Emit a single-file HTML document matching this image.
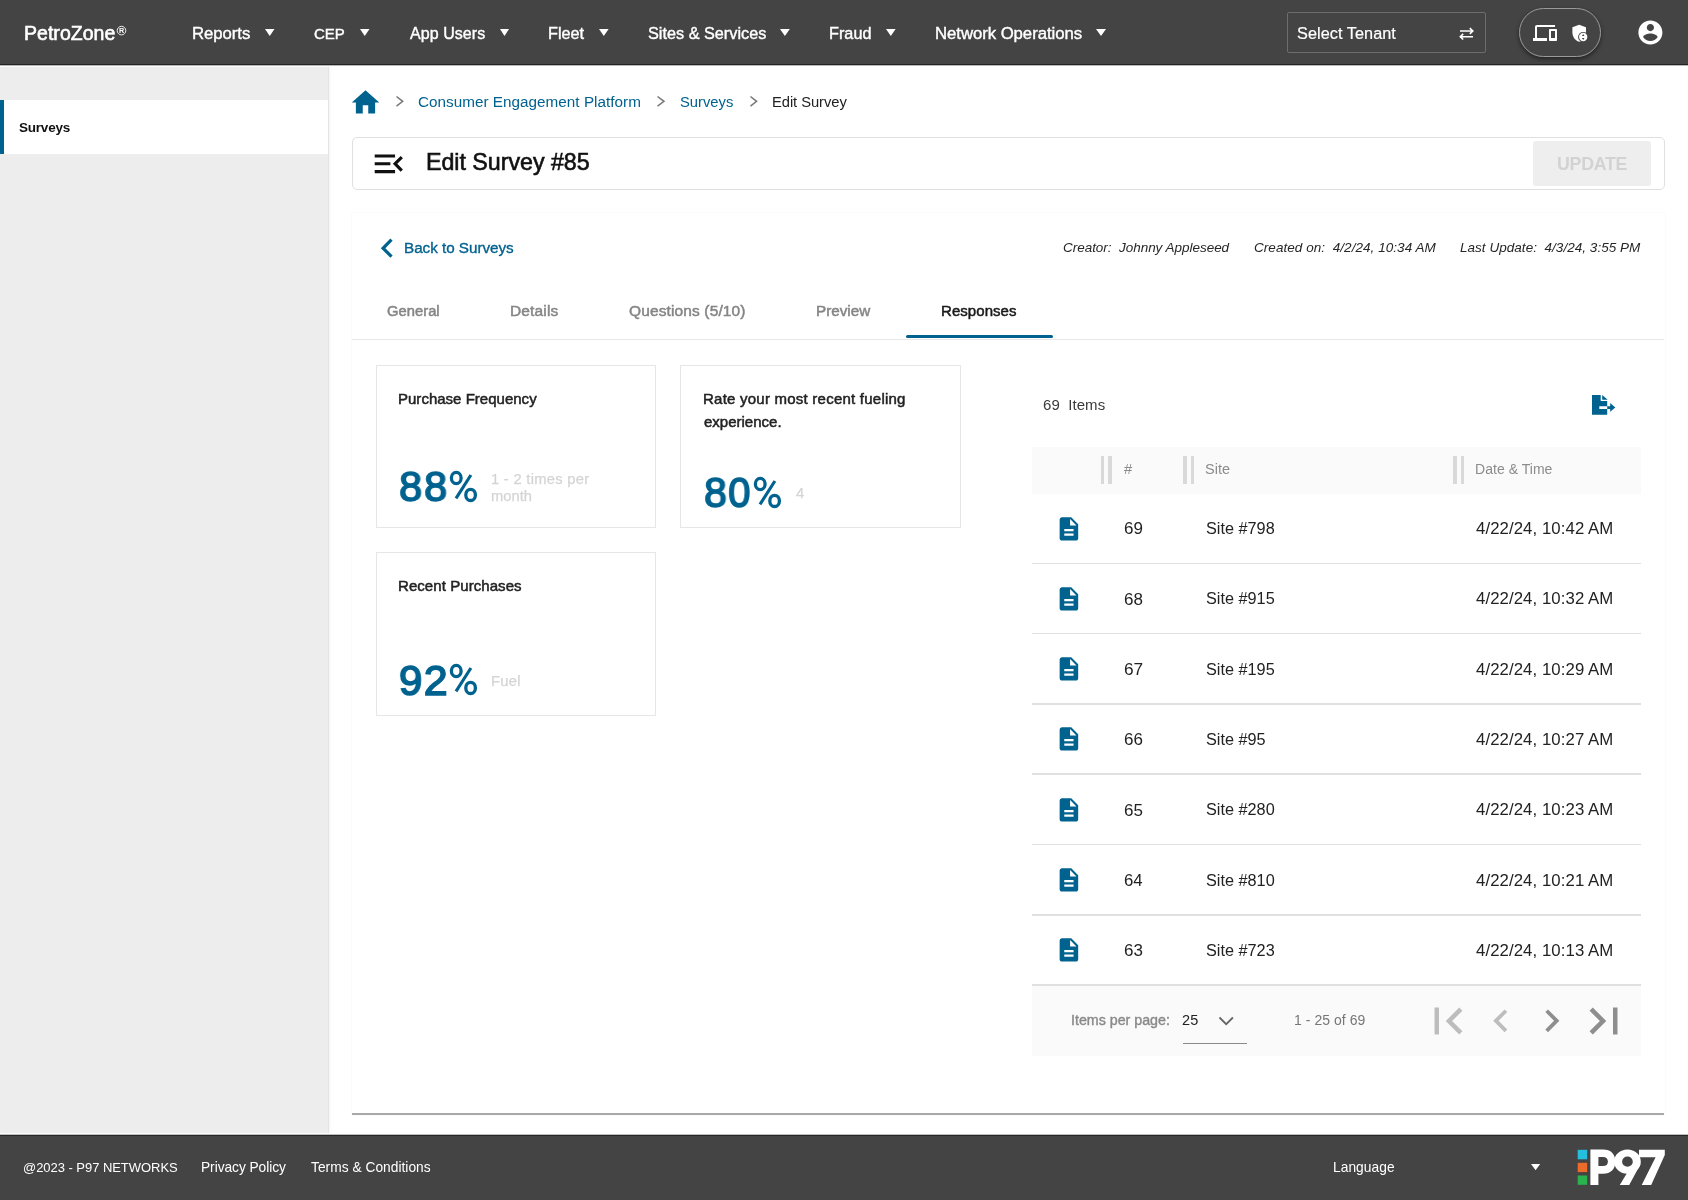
<!DOCTYPE html>
<html><head><meta charset="utf-8"><style>
html,body{margin:0;padding:0;width:1688px;height:1200px;overflow:hidden;background:#fff;position:relative}
body{font-family:"Liberation Sans",sans-serif}
.t{position:absolute;white-space:pre;will-change:transform}
body{-webkit-font-smoothing:antialiased}
svg{position:absolute;will-change:transform}
</style></head><body>
<div style="position:absolute;left:0px;top:67px;width:328px;height:1066px;background:#ededed;box-shadow:1px 0 0 #e4e4e4, 2px 0 3px rgba(0,0,0,.05)"></div>
<div style="position:absolute;left:0px;top:100px;width:328px;height:54px;background:#fff"></div>
<div style="position:absolute;left:0px;top:100px;width:4px;height:54px;background:#00628f"></div>
<div style="position:absolute;left:352px;top:213px;width:1313px;height:902px;background:#fff;box-shadow:0 0 1px rgba(0,0,0,.10)"></div>
<div style="position:absolute;left:352px;top:1113px;width:1312px;height:2px;background:#a8a8a8"></div>
<div style="position:absolute;left:0px;top:0px;width:1688px;height:64px;background:#444;border-bottom:1px solid #232323"></div>
<div style="position:absolute;left:0px;top:65px;width:1688px;height:1px;background:rgba(0,0,0,.28)"></div>
<div style="position:absolute;left:0px;top:1135px;width:1688px;height:65px;background:#444;border-top:1px solid #262626"></div>
<div style="position:absolute;left:0px;top:1134px;width:1688px;height:1px;background:rgba(0,0,0,.25)"></div>
<div class="t" style="left:23.64px;top:23.80px;font-size:19.5px;line-height:19.5px;color:#ffffff;letter-spacing:0.034px;-webkit-text-stroke:0.6px #ffffff;">PetroZone</div>
<svg style="position:absolute;left:116px;top:25px;" width="11" height="11" viewBox="0 0 11 11"><circle cx="5.5" cy="5.6" r="4.3" stroke="#fff" stroke-width="0.9" fill="none"/><text x="5.5" y="8.3" font-size="7.2" font-family="Liberation Sans" font-weight="700" fill="#fff" text-anchor="middle">R</text></svg>
<div class="t" style="left:191.86px;top:25.66px;font-size:16.75px;line-height:16.75px;color:#ffffff;letter-spacing:-0.050px;-webkit-text-stroke:0.4px #ffffff;">Reports</div>
<svg style="position:absolute;left:264px;top:28.1px;" width="11.5" height="9.0" viewBox="264 28.1 11.5 9.0"><path d="M265 29.1H274.5L269.75 36.1Z" fill="#fff"/></svg>
<div class="t" style="left:313.85px;top:25.66px;font-size:15.0px;line-height:15.0px;color:#ffffff;letter-spacing:-0.062px;-webkit-text-stroke:0.4px #ffffff;">CEP</div>
<svg style="position:absolute;left:359px;top:28.1px;" width="11.5" height="9.0" viewBox="359 28.1 11.5 9.0"><path d="M360 29.1H369.5L364.75 36.1Z" fill="#fff"/></svg>
<div class="t" style="left:409.60px;top:25.66px;font-size:16.0px;line-height:16.0px;color:#ffffff;letter-spacing:0.055px;-webkit-text-stroke:0.4px #ffffff;">App Users</div>
<svg style="position:absolute;left:498.5px;top:28.1px;" width="11.0" height="9.0" viewBox="498.5 28.1 11.0 9.0"><path d="M499.5 29.1H508.5L504.0 36.1Z" fill="#fff"/></svg>
<div class="t" style="left:548.30px;top:24.66px;font-size:16.25px;line-height:16.25px;color:#ffffff;-webkit-text-stroke:0.4px #ffffff;">Fleet</div>
<svg style="position:absolute;left:598px;top:28.1px;" width="11.600000000000023" height="9.0" viewBox="598 28.1 11.600000000000023 9.0"><path d="M599 29.1H608.6L603.8 36.1Z" fill="#fff"/></svg>
<div class="t" style="left:647.97px;top:24.66px;font-size:16.25px;line-height:16.25px;color:#ffffff;-webkit-text-stroke:0.4px #ffffff;">Sites &amp; Services</div>
<svg style="position:absolute;left:779.4px;top:28.1px;" width="11.800000000000068" height="9.0" viewBox="779.4 28.1 11.800000000000068 9.0"><path d="M780.4 29.1H790.2L785.3 36.1Z" fill="#fff"/></svg>
<div class="t" style="left:829.40px;top:24.66px;font-size:16.25px;line-height:16.25px;color:#ffffff;-webkit-text-stroke:0.4px #ffffff;">Fraud</div>
<svg style="position:absolute;left:885px;top:28.1px;" width="11.600000000000023" height="9.0" viewBox="885 28.1 11.600000000000023 9.0"><path d="M886 29.1H895.6L890.8 36.1Z" fill="#fff"/></svg>
<div class="t" style="left:934.76px;top:25.66px;font-size:16.75px;line-height:16.75px;color:#ffffff;letter-spacing:-0.056px;-webkit-text-stroke:0.4px #ffffff;">Network Operations</div>
<svg style="position:absolute;left:1095px;top:28.1px;" width="12" height="9.0" viewBox="1095 28.1 12 9.0"><path d="M1096 29.1H1106L1101.0 36.1Z" fill="#fff"/></svg>
<div style="position:absolute;left:1287px;top:11.5px;width:199px;height:41px;box-sizing:border-box;border:1.5px solid #6d6d6d;border-radius:2px"></div>
<div class="t" style="left:1297.17px;top:24.66px;font-size:16.25px;line-height:16.25px;color:#ffffff;letter-spacing:0.055px;-webkit-text-stroke:0.2px #ffffff;">Select Tenant</div>
<svg style="position:absolute;left:1455px;top:24px;" width="22" height="20" viewBox="1455 24 22 20"><path d="M1460 31H1472.3M1469.8 28.2L1472.8 31L1469.8 33.8M1473 36.7H1460.6M1463.2 33.9L1460.3 36.7L1463.2 39.5" stroke="#fff" stroke-width="1.6" fill="none"/></svg>
<div style="position:absolute;left:1519px;top:8px;width:82px;height:49px;box-sizing:border-box;border:1.5px solid #9a9a9a;border-radius:25px;box-shadow:0 2px 4px rgba(0,0,0,.5)"></div>
<svg style="position:absolute;left:1533px;top:20.7px;" width="24" height="24" viewBox="0 0 24 24"><path fill="#fff" d="M4 6h18V4H4c-1.1 0-2 .9-2 2v11H0v3h14v-3H4V6zm19 2h-6c-.55 0-1 .45-1 1v10c0 .55.45 1 1 1h6c.55 0 1-.45 1-1V9c0-.55-.45-1-1-1zm-1 9h-4v-7h4v7z"/></svg>
<svg style="position:absolute;left:1569.4px;top:22.5px;" width="20.4" height="20.4" viewBox="0 0 24 24"><path fill="#fff" d="M12,2L4,5v6.09c0,5.05,3.41,9.76,8,10.91c4.59-1.15,8-5.86,8-10.91V5L12,2z"/><circle cx="16.7" cy="16.5" r="6" fill="#444"/><circle cx="16.7" cy="16.5" r="4.9" fill="#fff"/><path d="M16.7 12.9L18.2 15.3H15.2Z M16.7 20.1L18.2 17.7H15.2Z" fill="#444"/></svg>
<svg style="position:absolute;left:1636.1px;top:18.4px;" width="28.8" height="28.8" viewBox="0 0 24 24"><path fill="#fff" d="M12 2C6.48 2 2 6.48 2 12s4.48 10 10 10 10-4.48 10-10S17.52 2 12 2zm0 3c1.66 0 3 1.34 3 3s-1.34 3-3 3-3-1.34-3-3 1.34-3 3-3zm0 14.2c-2.5 0-4.71-1.28-6-3.22.03-1.99 4-3.08 6-3.08 1.99 0 5.97 1.09 6 3.08-1.29 1.94-3.5 3.22-6 3.22z"/></svg>
<div class="t" style="left:18.59px;top:121.30px;font-size:13.5px;line-height:13.5px;color:#111;font-weight:700;letter-spacing:-0.212px;">Surveys</div>
<svg style="position:absolute;left:348.6px;top:85.5px;" width="33" height="33" viewBox="0 0 24 24"><path fill="#00628f" d="M10 20v-6h4v6h5v-8h3L12 3 2 12h3v8z"/></svg>
<svg style="position:absolute;left:393.7px;top:93.9px;" width="11.300000000000011" height="14.599999999999994" viewBox="393.7 93.9 11.300000000000011 14.599999999999994"><path d="M396.2 96.4L402.4 101.2L396.2 106.0" stroke="#777" stroke-width="1.5" fill="none"/></svg>
<svg style="position:absolute;left:654.9px;top:93.9px;" width="11.600000000000023" height="14.599999999999994" viewBox="654.9 93.9 11.600000000000023 14.599999999999994"><path d="M657.4 96.4L663.9 101.2L657.4 106.0" stroke="#777" stroke-width="1.5" fill="none"/></svg>
<svg style="position:absolute;left:747.8px;top:93.9px;" width="11.200000000000045" height="14.599999999999994" viewBox="747.8 93.9 11.200000000000045 14.599999999999994"><path d="M750.3 96.4L756.4 101.2L750.3 106.0" stroke="#777" stroke-width="1.5" fill="none"/></svg>
<div class="t" style="left:418.39px;top:93.66px;font-size:15.25px;line-height:15.25px;color:#00628f;letter-spacing:0.029px;">Consumer Engagement Platform</div>
<div class="t" style="left:679.74px;top:94.66px;font-size:14.75px;line-height:14.75px;color:#00628f;">Surveys</div>
<div class="t" style="left:772.22px;top:94.66px;font-size:14.75px;line-height:14.75px;color:#212121;letter-spacing:-0.067px;">Edit Survey</div>
<div style="position:absolute;left:352px;top:137px;width:1313px;height:53px;box-sizing:border-box;border:1.5px solid #e0e0e0;border-radius:5px;background:#fff"></div>
<svg style="position:absolute;left:370.1px;top:144.6px;" width="37.6" height="37.6" viewBox="0 0 24 24"><path fill="#111" d="M3 18h13v-2H3v2zm0-5h10v-2H3v2zm0-7v2h13V6H3zm18 9.59L17.42 12 21 8.41 19.59 7l-5 5 5 5L21 15.59z"/></svg>
<div class="t" style="left:426.44px;top:151.40px;font-size:23.25px;line-height:23.25px;color:#111;letter-spacing:-0.032px;-webkit-text-stroke:0.6px #111;">Edit Survey #85</div>
<div style="position:absolute;left:1533px;top:140.5px;width:118px;height:45.5px;background:#eee;border-radius:3px"></div>
<div class="t" style="left:1556.73px;top:155.90px;font-size:17.75px;line-height:17.75px;color:#d2d2d2;font-weight:700;letter-spacing:-0.247px;">UPDATE</div>
<svg style="position:absolute;left:368.2px;top:229.15px;" width="38.4" height="38.4" viewBox="0 0 24 24"><path fill="#00628f" d="M15.41 7.41L14 6l-6 6 6 6 1.41-1.41L10.83 12z"/></svg>
<div class="t" style="left:404.06px;top:239.77px;font-size:15.25px;line-height:15.25px;color:#00628f;letter-spacing:-0.034px;-webkit-text-stroke:0.35px #00628f;">Back to Surveys</div>
<div class="t" style="left:1062.96px;top:240.85px;font-size:13.5px;line-height:13.5px;color:#262626;font-style:italic;letter-spacing:-0.029px;">Creator:  Johnny Appleseed</div>
<div class="t" style="left:1253.56px;top:240.85px;font-size:13.5px;line-height:13.5px;color:#262626;font-style:italic;letter-spacing:0.051px;">Created on:  4/2/24, 10:34 AM</div>
<div class="t" style="left:1460.39px;top:240.85px;font-size:13.5px;line-height:13.5px;color:#262626;font-style:italic;letter-spacing:0.035px;">Last Update:  4/3/24, 3:55 PM</div>
<div class="t" style="left:387.41px;top:303.90px;font-size:14.75px;line-height:14.75px;color:#858585;letter-spacing:0.027px;-webkit-text-stroke:0.5px #858585;">General</div>
<div class="t" style="left:510.41px;top:302.90px;font-size:15.5px;line-height:15.5px;color:#858585;letter-spacing:0.155px;-webkit-text-stroke:0.5px #858585;">Details</div>
<div class="t" style="left:629.45px;top:302.90px;font-size:15.5px;line-height:15.5px;color:#858585;letter-spacing:0.126px;-webkit-text-stroke:0.5px #858585;">Questions (5/10)</div>
<div class="t" style="left:815.83px;top:302.90px;font-size:15.25px;line-height:15.25px;color:#858585;-webkit-text-stroke:0.5px #858585;">Preview</div>
<div class="t" style="left:941.45px;top:302.90px;font-size:15.0px;line-height:15.0px;color:#1a1a1a;letter-spacing:0.056px;-webkit-text-stroke:0.5px #1a1a1a;">Responses</div>
<div style="position:absolute;left:352px;top:339px;width:1312px;height:1px;background:#e8e8e8"></div>
<div style="position:absolute;left:906px;top:335.3px;width:147px;height:3.2px;background:#00628f;border-radius:2px"></div>
<div style="position:absolute;left:375.5px;top:364.7px;width:280.5px;height:163.5px;box-sizing:border-box;border:1.5px solid #e6e6e6;background:#fff"></div>
<div style="position:absolute;left:680.3px;top:364.7px;width:280.5px;height:163.5px;box-sizing:border-box;border:1.5px solid #e6e6e6;background:#fff"></div>
<div style="position:absolute;left:375.5px;top:552.1px;width:280.5px;height:163.5px;box-sizing:border-box;border:1.5px solid #e6e6e6;background:#fff"></div>
<div class="t" style="left:398.35px;top:390.84px;font-size:15.0px;line-height:15.0px;color:#222;letter-spacing:0.013px;-webkit-text-stroke:0.5px #222;">Purchase Frequency</div>
<div class="t" style="left:400.20px;top:466.20px;font-size:42.25px;line-height:42.25px;color:#00628f;transform-origin:0 0;transform:translateX(-0.87px) scaleX(0.978);-webkit-text-stroke:1.6px #00628f;">8</div>
<div class="t" style="left:424.50px;top:466.20px;font-size:42.25px;line-height:42.25px;color:#00628f;transform-origin:0 0;transform:translateX(-0.87px) scaleX(0.978);-webkit-text-stroke:1.6px #00628f;">8</div>
<svg style="position:absolute;left:445px;top:466px;" width="40" height="42" viewBox="0 0 40 42"><ellipse cx="11.25" cy="12" rx="4.85" ry="5.55" stroke="#00628f" stroke-width="3.3" fill="none"/><ellipse cx="25.6" cy="28.9" rx="4.8" ry="5.6" stroke="#00628f" stroke-width="3.3" fill="none"/><path d="M25.9 9.0L11.0 32.4" stroke="#00628f" stroke-width="3.1"/></svg>
<div class="t" style="left:491.22px;top:471.70px;font-size:14.75px;line-height:14.75px;color:#d4d4d4;letter-spacing:0.275px;-webkit-text-stroke:0.25px #d4d4d4;">1 - 2 times per</div>
<div class="t" style="left:491.37px;top:489.30px;font-size:14.75px;line-height:14.75px;color:#d4d4d4;-webkit-text-stroke:0.25px #d4d4d4;">month</div>
<div class="t" style="left:702.95px;top:390.84px;font-size:15.0px;line-height:15.0px;color:#222;letter-spacing:0.232px;-webkit-text-stroke:0.5px #222;">Rate your most recent fueling</div>
<div class="t" style="left:703.55px;top:413.90px;font-size:15px;line-height:15px;color:#222;-webkit-text-stroke:0.5px #222;">experience.</div>
<div class="t" style="left:705.00px;top:472.10px;font-size:42.25px;line-height:42.25px;color:#00628f;transform-origin:0 0;transform:translateX(-0.86px) scaleX(0.965);-webkit-text-stroke:1.6px #00628f;">8</div>
<div class="t" style="left:729.20px;top:472.10px;font-size:42.25px;line-height:42.25px;color:#00628f;transform-origin:0 0;transform:translateX(-0.85px) scaleX(0.951);-webkit-text-stroke:1.6px #00628f;">0</div>
<svg style="position:absolute;left:749.4px;top:471.9px;" width="40" height="42" viewBox="0 0 40 42"><ellipse cx="11.25" cy="12" rx="4.85" ry="5.55" stroke="#00628f" stroke-width="3.3" fill="none"/><ellipse cx="25.6" cy="28.9" rx="4.8" ry="5.6" stroke="#00628f" stroke-width="3.3" fill="none"/><path d="M25.9 9.0L11.0 32.4" stroke="#00628f" stroke-width="3.1"/></svg>
<div class="t" style="left:796.13px;top:486.20px;font-size:14.75px;line-height:14.75px;color:#d4d4d4;-webkit-text-stroke:0.25px #d4d4d4;">4</div>
<div class="t" style="left:398.35px;top:578.24px;font-size:15.0px;line-height:15.0px;color:#222;letter-spacing:0.065px;-webkit-text-stroke:0.5px #222;">Recent Purchases</div>
<div class="t" style="left:400.20px;top:659.50px;font-size:42.25px;line-height:42.25px;color:#00628f;transform-origin:0 0;transform:translateX(-1.10px) scaleX(0.998);-webkit-text-stroke:1.6px #00628f;">9</div>
<div class="t" style="left:424.50px;top:659.50px;font-size:42.25px;line-height:42.25px;color:#00628f;transform-origin:0 0;transform:translateX(-1.34px) scaleX(1.018);-webkit-text-stroke:1.6px #00628f;">2</div>
<svg style="position:absolute;left:445px;top:659.3px;" width="40" height="42" viewBox="0 0 40 42"><ellipse cx="11.25" cy="12" rx="4.85" ry="5.55" stroke="#00628f" stroke-width="3.3" fill="none"/><ellipse cx="25.6" cy="28.9" rx="4.8" ry="5.6" stroke="#00628f" stroke-width="3.3" fill="none"/><path d="M25.9 9.0L11.0 32.4" stroke="#00628f" stroke-width="3.1"/></svg>
<div class="t" style="left:491.14px;top:673.60px;font-size:14.75px;line-height:14.75px;color:#d4d4d4;letter-spacing:0.267px;-webkit-text-stroke:0.25px #d4d4d4;">Fuel</div>
<div class="t" style="left:1043.25px;top:396.90px;font-size:15.0px;line-height:15.0px;color:#3a3a3a;letter-spacing:0.056px;">69  Items</div>
<svg style="position:absolute;left:1580px;top:385px;" width="45" height="40" viewBox="0 0 45 40"><path fill="#00628f" d="M12 10H20.7V16H27.2V21.2H19.3V24H27.2V29.8H12Z M22.2 10L27.7 14.7H22.2Z M27.2 21.2H30.3V24H27.2Z M30.2 18L35.3 22.6L30.2 26.8Z"/></svg>
<div style="position:absolute;left:1031.5px;top:446.5px;width:609.5px;height:47px;background:#fafafa"></div>
<div style="position:absolute;left:1100.8px;top:456.4px;width:3.5px;height:27.3px;background:#d9d9d9"></div>
<div style="position:absolute;left:1108.3px;top:456.4px;width:3.5px;height:27.3px;background:#d9d9d9"></div>
<div style="position:absolute;left:1183px;top:456.4px;width:3.5px;height:27.3px;background:#d9d9d9"></div>
<div style="position:absolute;left:1190.5px;top:456.4px;width:3.5px;height:27.3px;background:#d9d9d9"></div>
<div style="position:absolute;left:1453px;top:456.4px;width:3.5px;height:27.3px;background:#d9d9d9"></div>
<div style="position:absolute;left:1460.5px;top:456.4px;width:3.5px;height:27.3px;background:#d9d9d9"></div>
<div class="t" style="left:1124.43px;top:462.40px;font-size:14.75px;line-height:14.75px;color:#8c8c8c;">#</div>
<div class="t" style="left:1205.25px;top:462.40px;font-size:14.5px;line-height:14.5px;color:#8c8c8c;">Site</div>
<div class="t" style="left:1474.78px;top:462.40px;font-size:14.0px;line-height:14.0px;color:#8c8c8c;letter-spacing:0.038px;">Date &amp; Time</div>
<svg style="position:absolute;left:1055.2px;top:514.5px;" width="27.84" height="27.84" viewBox="0 0 24 24"><path fill="#00628f" d="M14 2H6c-1.1 0-1.99.9-1.99 2L4 20c0 1.1.89 2 1.99 2H18c1.1 0 2-.9 2-2V8l-6-6zm2 16H8v-2h8v2zm0-4H8v-2h8v2zm-3-5V3.5L18.5 9H13z"/></svg>
<div class="t" style="left:1123.85px;top:520.40px;font-size:17.0px;line-height:17.0px;color:#222;letter-spacing:0.045px;">69</div>
<div class="t" style="left:1205.77px;top:520.10px;font-size:16.25px;line-height:16.25px;color:#222;">Site #798</div>
<div class="t" style="left:1475.87px;top:521.10px;font-size:16.75px;line-height:16.75px;color:#222;letter-spacing:0.084px;">4/22/24, 10:42 AM</div>
<div style="position:absolute;left:1031.5px;top:562.5px;width:609.5px;height:1.5px;background:#e0e0e0"></div>
<svg style="position:absolute;left:1055.2px;top:584.83px;" width="27.84" height="27.84" viewBox="0 0 24 24"><path fill="#00628f" d="M14 2H6c-1.1 0-1.99.9-1.99 2L4 20c0 1.1.89 2 1.99 2H18c1.1 0 2-.9 2-2V8l-6-6zm2 16H8v-2h8v2zm0-4H8v-2h8v2zm-3-5V3.5L18.5 9H13z"/></svg>
<div class="t" style="left:1123.85px;top:590.73px;font-size:17.0px;line-height:17.0px;color:#222;letter-spacing:-0.040px;">68</div>
<div class="t" style="left:1205.77px;top:590.43px;font-size:16.25px;line-height:16.25px;color:#222;">Site #915</div>
<div class="t" style="left:1475.87px;top:591.43px;font-size:16.75px;line-height:16.75px;color:#222;letter-spacing:0.084px;">4/22/24, 10:32 AM</div>
<div style="position:absolute;left:1031.5px;top:632.83px;width:609.5px;height:1.5px;background:#e0e0e0"></div>
<svg style="position:absolute;left:1055.2px;top:655.16px;" width="27.84" height="27.84" viewBox="0 0 24 24"><path fill="#00628f" d="M14 2H6c-1.1 0-1.99.9-1.99 2L4 20c0 1.1.89 2 1.99 2H18c1.1 0 2-.9 2-2V8l-6-6zm2 16H8v-2h8v2zm0-4H8v-2h8v2zm-3-5V3.5L18.5 9H13z"/></svg>
<div class="t" style="left:1123.84px;top:661.06px;font-size:17.25px;line-height:17.25px;color:#222;letter-spacing:-0.123px;">67</div>
<div class="t" style="left:1205.77px;top:660.76px;font-size:16.25px;line-height:16.25px;color:#222;">Site #195</div>
<div class="t" style="left:1475.87px;top:661.76px;font-size:16.75px;line-height:16.75px;color:#222;letter-spacing:0.084px;">4/22/24, 10:29 AM</div>
<div style="position:absolute;left:1031.5px;top:703.16px;width:609.5px;height:1.5px;background:#e0e0e0"></div>
<svg style="position:absolute;left:1055.2px;top:725.49px;" width="27.84" height="27.84" viewBox="0 0 24 24"><path fill="#00628f" d="M14 2H6c-1.1 0-1.99.9-1.99 2L4 20c0 1.1.89 2 1.99 2H18c1.1 0 2-.9 2-2V8l-6-6zm2 16H8v-2h8v2zm0-4H8v-2h8v2zm-3-5V3.5L18.5 9H13z"/></svg>
<div class="t" style="left:1123.85px;top:731.39px;font-size:17.0px;line-height:17.0px;color:#222;letter-spacing:-0.040px;">66</div>
<div class="t" style="left:1205.77px;top:731.09px;font-size:16.25px;line-height:16.25px;color:#222;">Site #95</div>
<div class="t" style="left:1475.87px;top:732.09px;font-size:16.75px;line-height:16.75px;color:#222;letter-spacing:0.084px;">4/22/24, 10:27 AM</div>
<div style="position:absolute;left:1031.5px;top:773.49px;width:609.5px;height:1.5px;background:#e0e0e0"></div>
<svg style="position:absolute;left:1055.2px;top:795.8199999999999px;" width="27.84" height="27.84" viewBox="0 0 24 24"><path fill="#00628f" d="M14 2H6c-1.1 0-1.99.9-1.99 2L4 20c0 1.1.89 2 1.99 2H18c1.1 0 2-.9 2-2V8l-6-6zm2 16H8v-2h8v2zm0-4H8v-2h8v2zm-3-5V3.5L18.5 9H13z"/></svg>
<div class="t" style="left:1123.85px;top:801.72px;font-size:17.0px;line-height:17.0px;color:#222;letter-spacing:-0.040px;">65</div>
<div class="t" style="left:1205.77px;top:801.42px;font-size:16.25px;line-height:16.25px;color:#222;">Site #280</div>
<div class="t" style="left:1475.87px;top:802.42px;font-size:16.75px;line-height:16.75px;color:#222;letter-spacing:0.084px;">4/22/24, 10:23 AM</div>
<div style="position:absolute;left:1031.5px;top:843.8199999999999px;width:609.5px;height:1.5px;background:#e0e0e0"></div>
<svg style="position:absolute;left:1055.2px;top:866.15px;" width="27.84" height="27.84" viewBox="0 0 24 24"><path fill="#00628f" d="M14 2H6c-1.1 0-1.99.9-1.99 2L4 20c0 1.1.89 2 1.99 2H18c1.1 0 2-.9 2-2V8l-6-6zm2 16H8v-2h8v2zm0-4H8v-2h8v2zm-3-5V3.5L18.5 9H13z"/></svg>
<div class="t" style="left:1123.86px;top:873.05px;font-size:16.75px;line-height:16.75px;color:#222;letter-spacing:-0.036px;">64</div>
<div class="t" style="left:1205.77px;top:871.75px;font-size:16.25px;line-height:16.25px;color:#222;">Site #810</div>
<div class="t" style="left:1475.87px;top:872.75px;font-size:16.75px;line-height:16.75px;color:#222;letter-spacing:0.084px;">4/22/24, 10:21 AM</div>
<div style="position:absolute;left:1031.5px;top:914.15px;width:609.5px;height:1.5px;background:#e0e0e0"></div>
<svg style="position:absolute;left:1055.2px;top:936.48px;" width="27.84" height="27.84" viewBox="0 0 24 24"><path fill="#00628f" d="M14 2H6c-1.1 0-1.99.9-1.99 2L4 20c0 1.1.89 2 1.99 2H18c1.1 0 2-.9 2-2V8l-6-6zm2 16H8v-2h8v2zm0-4H8v-2h8v2zm-3-5V3.5L18.5 9H13z"/></svg>
<div class="t" style="left:1123.85px;top:942.38px;font-size:17.0px;line-height:17.0px;color:#222;letter-spacing:-0.040px;">63</div>
<div class="t" style="left:1205.77px;top:942.08px;font-size:16.25px;line-height:16.25px;color:#222;">Site #723</div>
<div class="t" style="left:1475.87px;top:943.08px;font-size:16.75px;line-height:16.75px;color:#222;letter-spacing:0.084px;">4/22/24, 10:13 AM</div>
<div style="position:absolute;left:1031.5px;top:984.48px;width:609.5px;height:1.5px;background:#e0e0e0"></div>
<div style="position:absolute;left:1031.5px;top:985.5px;width:609.5px;height:70.5px;background:#fafafa"></div>
<div class="t" style="left:1071.22px;top:1013.30px;font-size:14.25px;line-height:14.25px;color:#8a8a8a;letter-spacing:-0.012px;-webkit-text-stroke:0.4px #8a8a8a;">Items per page:</div>
<div class="t" style="left:1182.48px;top:1013.30px;font-size:14.5px;line-height:14.5px;color:#222;letter-spacing:0.110px;">25</div>
<svg style="position:absolute;left:1215px;top:1012px;" width="22" height="16" viewBox="1215 1012 22 16"><path d="M1219.5 1017.5L1226.2 1024.2L1232.9 1017.5" stroke="#666" stroke-width="1.8" fill="none"/></svg>
<div style="position:absolute;left:1183px;top:1042.5px;width:64px;height:1.5px;background:#8a8a8a"></div>
<div class="t" style="left:1293.55px;top:1013.30px;font-size:14.0px;line-height:14.0px;color:#777;letter-spacing:0.049px;">1 - 25 of 69</div>
<svg style="position:absolute;left:1421.2px;top:993.6px;" width="54" height="54" viewBox="0 0 24 24"><path fill="#bdbdbd" d="M18.41 16.59L13.82 12l4.59-4.59L17 6l-6 6 6 6zM6 6h2v12H6z"/></svg>
<svg style="position:absolute;left:1478.2px;top:997.9px;" width="45.6" height="45.6" viewBox="0 0 24 24"><path fill="#bdbdbd" d="M15.41 7.41L14 6l-6 6 6 6 1.41-1.41L10.83 12z"/></svg>
<svg style="position:absolute;left:1528.5px;top:997.9px;" width="45.6" height="45.6" viewBox="0 0 24 24"><path fill="#8e8e8e" d="M10 6L8.59 7.41 13.17 12l-4.58 4.59L10 18l6-6z"/></svg>
<svg style="position:absolute;left:1576.8px;top:993.6px;" width="54" height="54" viewBox="0 0 24 24"><path fill="#8e8e8e" d="M5.59 7.41L10.18 12l-4.59 4.59L7 18l6-6-6-6zM16 6h2v12h-2z"/></svg>
<div class="t" style="left:23.02px;top:1160.65px;font-size:13.0px;line-height:13.0px;color:#fff;letter-spacing:-0.043px;">@2023 - P97 NETWORKS</div>
<div class="t" style="left:201.10px;top:1160.65px;font-size:13.75px;line-height:13.75px;color:#fff;letter-spacing:-0.053px;">Privacy Policy</div>
<div class="t" style="left:311.12px;top:1160.65px;font-size:13.75px;line-height:13.75px;color:#fff;letter-spacing:0.026px;">Terms &amp; Conditions</div>
<div class="t" style="left:1333.30px;top:1160.65px;font-size:13.75px;line-height:13.75px;color:#fff;letter-spacing:0.052px;">Language</div>
<svg style="position:absolute;left:1530px;top:1163px;" width="11.200000000000045" height="8.200000000000045" viewBox="1530 1163 11.200000000000045 8.200000000000045"><path d="M1531 1164H1540.2L1535.6 1170.2Z" fill="#fff"/></svg>
<svg style="position:absolute;left:1570px;top:1140px;" width="100" height="55" viewBox="0 0 100 55"><rect x="7.7" y="9.8" width="9.5" height="9.5" fill="#23bfdc"/><rect x="7.7" y="22.8" width="9.5" height="9.3" fill="#ec6a2a"/><rect x="7.7" y="35.5" width="9.5" height="9.3" fill="#2ab24f"/><path fill="#fff" fill-rule="evenodd" d="M20.4 9.5H33C41 9.5 45.3 14 45.3 21.6C45.3 29.3 41 33.8 33 33.8H28.4V45H20.4Z M28.4 16.9V26.1H33C36.3 26.1 37.9 24.4 37.9 21.5C37.9 18.6 36.3 16.9 33 16.9Z"/><path fill="#fff" fill-rule="evenodd" d="M44.1 21.65A13.35 12.15 0 1 0 70.8 21.65A13.35 12.15 0 1 0 44.1 21.65Z M52.1 21.65A5.35 5.05 0 1 0 62.8 21.65A5.35 5.05 0 1 0 52.1 21.65Z"/><path fill="#fff" d="M70.6 24L59.2 45H49.8L58.5 30.5Z"/><path fill="#fff" d="M69 9.8H94.8V15L81.2 45H71.7L85.6 17.2H69Z"/></svg>
</body></html>
